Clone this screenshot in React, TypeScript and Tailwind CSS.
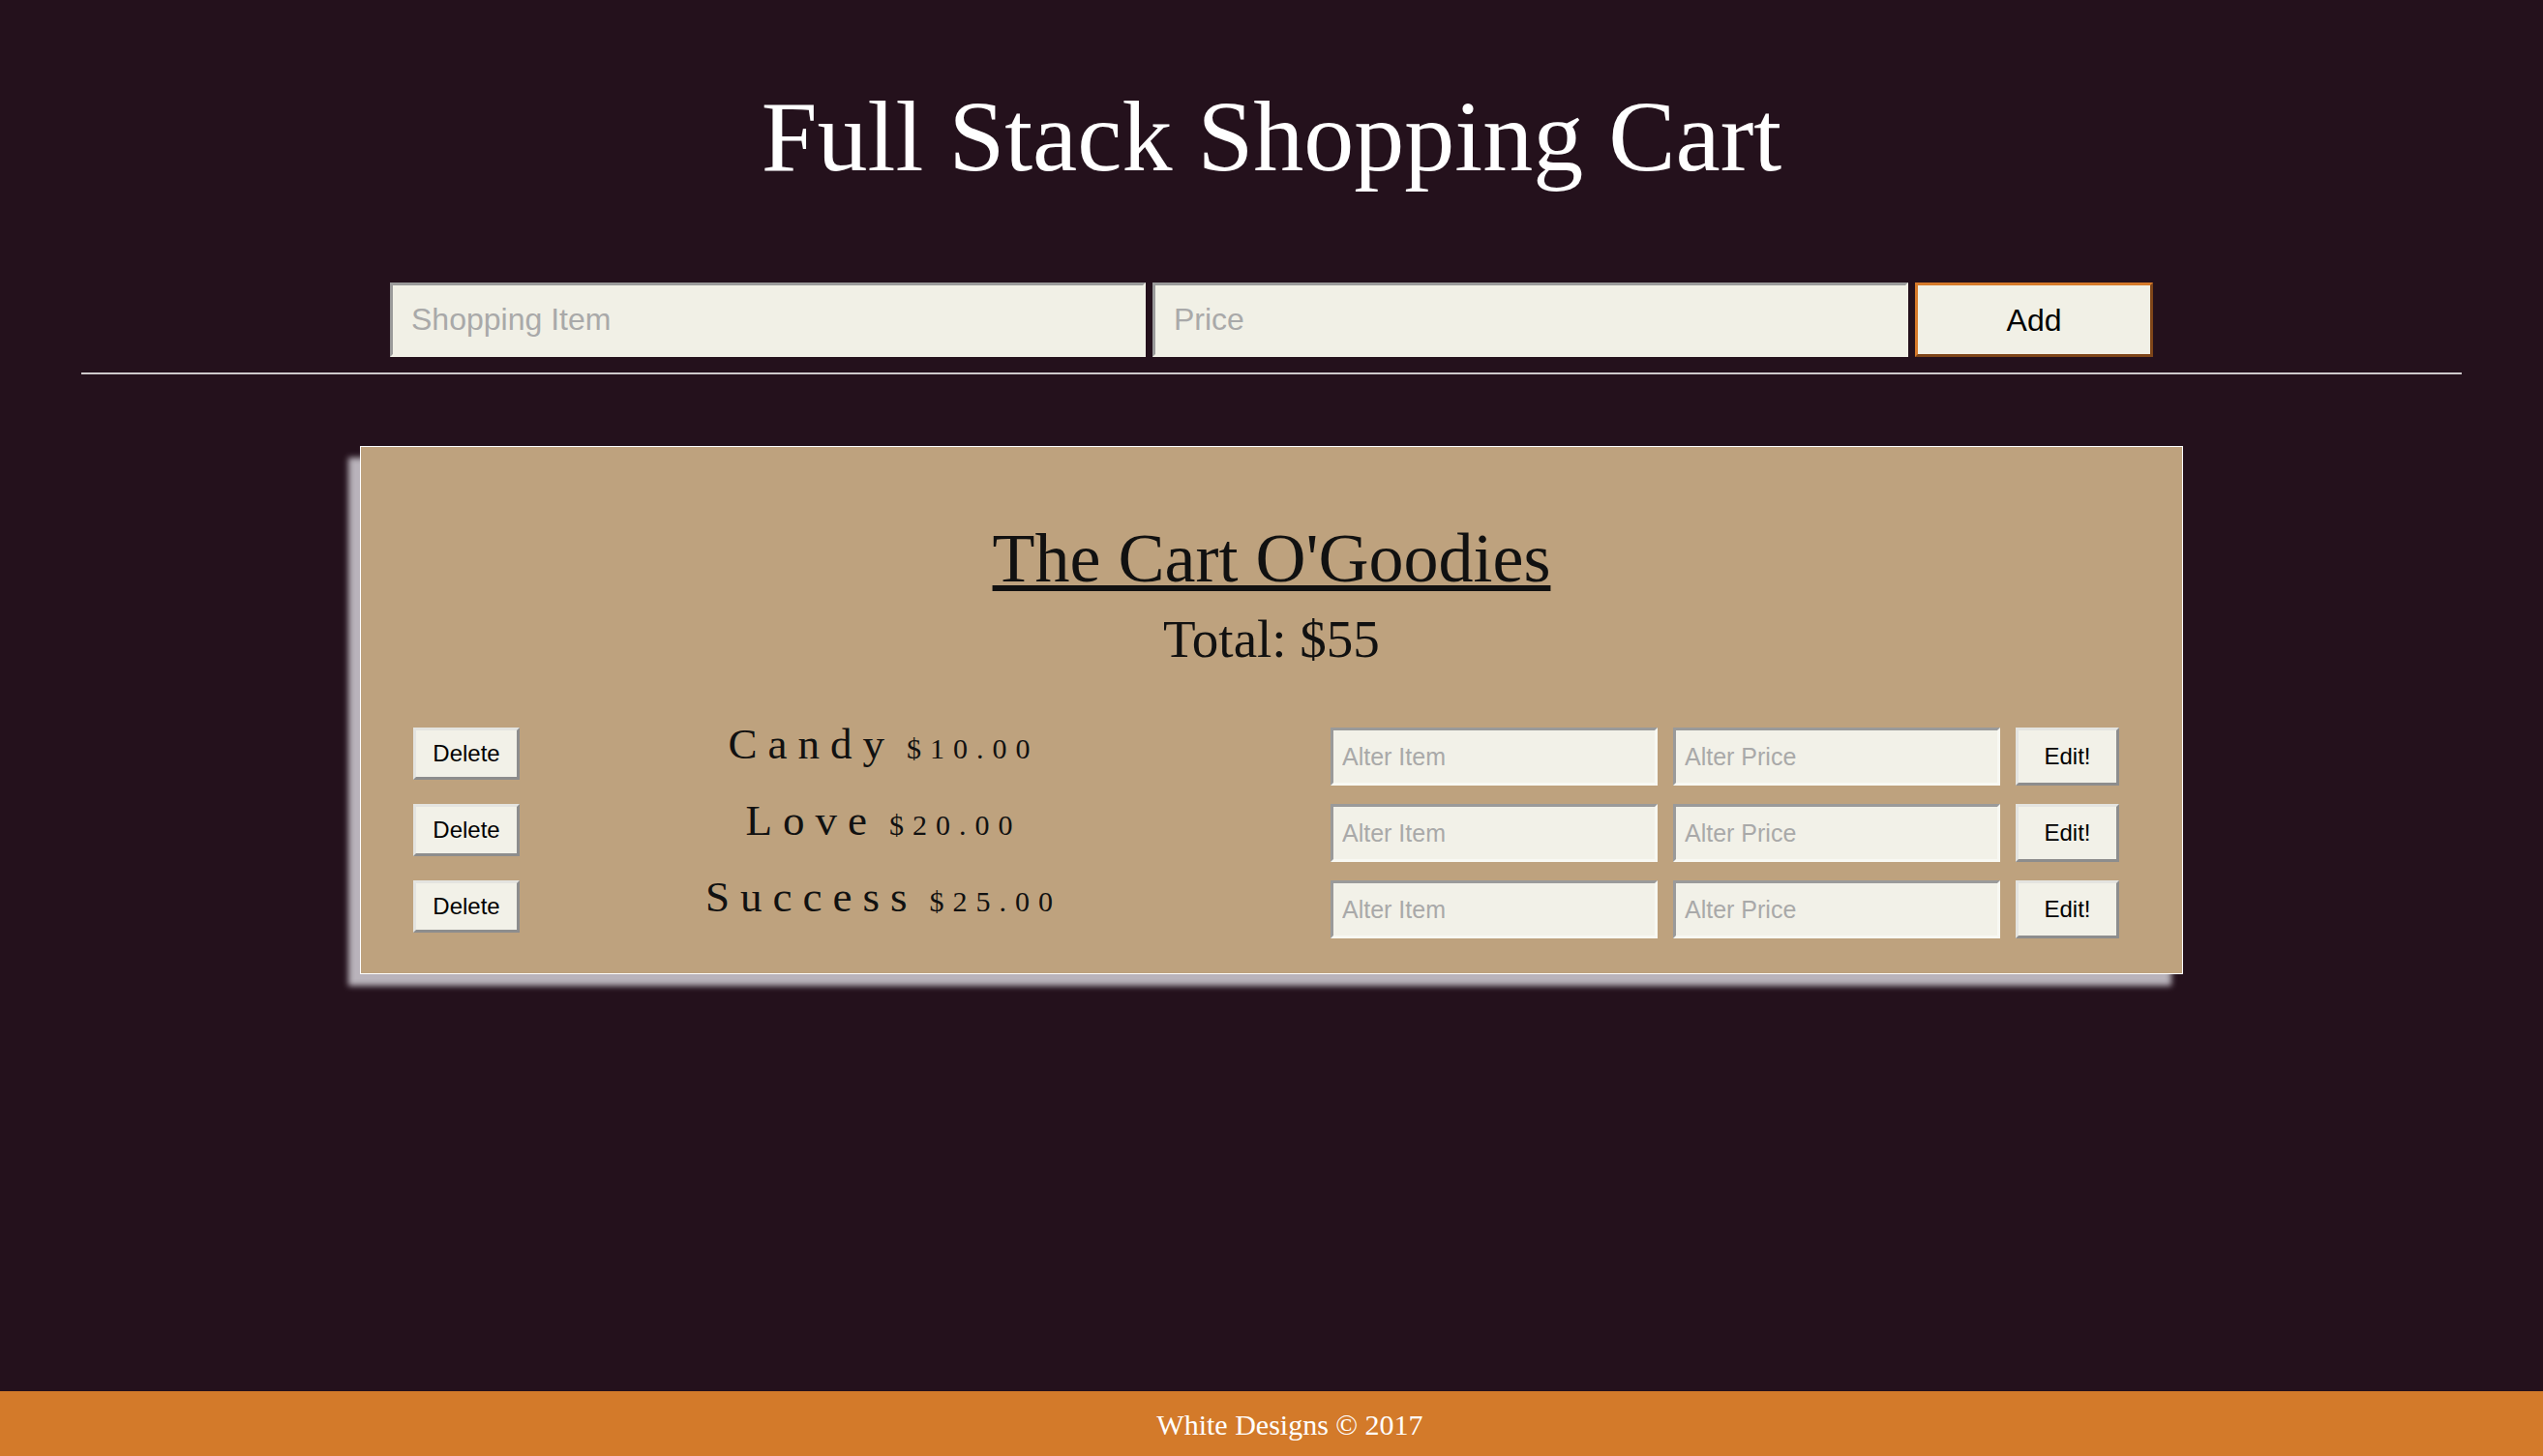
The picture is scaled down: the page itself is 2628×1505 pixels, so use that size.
import React from "react";

const items = [
  { name: "Candy", price: "$10.00" },
  { name: "Love", price: "$20.00" },
  { name: "Success", price: "$25.00" },
];

function Row({ name, price }: { name: string; price: string }) {
  return (
    <div className="flex h-[60px] items-start pl-[54px]">
      <button className="h-[54px] w-[110px] border-[3px] border-t-[#e4e4e0] border-l-[#e4e4e0] border-b-[#8d8d8d] border-r-[#8d8d8d] bg-[#f2f1e8] font-['Liberation_Sans',Arial,sans-serif] text-[24px] leading-none text-black">
        Delete
      </button>
      <div className="w-[752px] text-center font-['Liberation_Serif','Times_New_Roman',serif] leading-[35px] text-[#111]">
        <span className="text-[45px] tracking-[11px]">{name}</span>
        <span className="ml-[12px] text-[30px] tracking-[9px]">{price}</span>
      </div>
      <input
        placeholder="Alter Item"
        className="ml-[86px] h-[60px] w-[338px] border-[3px] border-t-[#9a9a9a] border-l-[#9a9a9a] border-b-[#f8f8f2] border-r-[#f8f8f2] bg-[#f2f1e8] px-[9px] font-['Liberation_Sans',Arial,sans-serif] text-[25px] text-black outline-none placeholder:text-[#a9a9a9]"
      />
      <input
        placeholder="Alter Price"
        className="ml-[16px] h-[60px] w-[338px] border-[3px] border-t-[#9a9a9a] border-l-[#9a9a9a] border-b-[#f8f8f2] border-r-[#f8f8f2] bg-[#f2f1e8] px-[9px] font-['Liberation_Sans',Arial,sans-serif] text-[25px] text-black outline-none placeholder:text-[#a9a9a9]"
      />
      <button className="ml-[16px] h-[60px] w-[107px] border-[3px] border-t-[#e4e4e0] border-l-[#e4e4e0] border-b-[#8d8d8d] border-r-[#8d8d8d] bg-[#f2f1e8] font-['Liberation_Sans',Arial,sans-serif] text-[24px] leading-none text-black">
        Edit!
      </button>
    </div>
  );
}

export default function App() {
  return (
    <div className="flex min-h-screen flex-col bg-[#24111c] font-['Liberation_Serif','Times_New_Roman',serif]">
      <h1 className="mt-[89px] text-center text-[104px] font-normal leading-none text-white">
        Full Stack Shopping Cart
      </h1>

      <div className="mt-[99px] flex justify-center gap-[7px]">
        <input
          placeholder="Shopping Item"
          className="h-[77px] w-[781px] border-[3px] border-t-[#9a9a9a] border-l-[#9a9a9a] border-b-[#f1f0e6] border-r-[#f1f0e6] bg-[#f1f0e6] px-[19px] font-['Liberation_Sans',Arial,sans-serif] text-[32px] text-black outline-none placeholder:text-[#a9a9a9]"
        />
        <input
          placeholder="Price"
          className="h-[77px] w-[781px] border-[3px] border-t-[#9a9a9a] border-l-[#9a9a9a] border-b-[#f1f0e6] border-r-[#f1f0e6] bg-[#f1f0e6] px-[19px] font-['Liberation_Sans',Arial,sans-serif] text-[32px] text-black outline-none placeholder:text-[#a9a9a9]"
        />
        <button className="h-[77px] w-[246px] border-[3px] border-t-[#d67a2a] border-l-[#d67a2a] border-b-[#7e4518] border-r-[#7e4518] bg-[#f1f0e6] font-['Liberation_Sans',Arial,sans-serif] text-[32px] leading-none text-black">
          Add
        </button>
      </div>

      <div className="mx-[84px] mt-[16px] h-[2px] bg-[#cdc9cb]" />

      <div className="mx-auto mt-[74px] w-[1884px] border border-white bg-[#bea27e] pb-[36px] pt-[79px] shadow-[-12px_12px_6px_#b9b3bb]">
        <h2 className="text-center text-[72px] font-normal leading-none text-[#111] underline decoration-[6px] underline-offset-[4px]">
          The Cart O'Goodies
        </h2>
        <div className="mt-[20px] text-center text-[55px] leading-none text-[#111]">
          Total: $55
        </div>
        <div className="mt-[64px] flex flex-col gap-[19px]">
          {items.map((it) => (
            <Row key={it.name} name={it.name} price={it.price} />
          ))}
        </div>
      </div>

      <footer className="mt-auto h-[67px] bg-[#d37a2a] pl-[38px] pt-[20px] text-center text-[30px] leading-none text-white">
        White Designs © 2017
      </footer>
    </div>
  );
}
